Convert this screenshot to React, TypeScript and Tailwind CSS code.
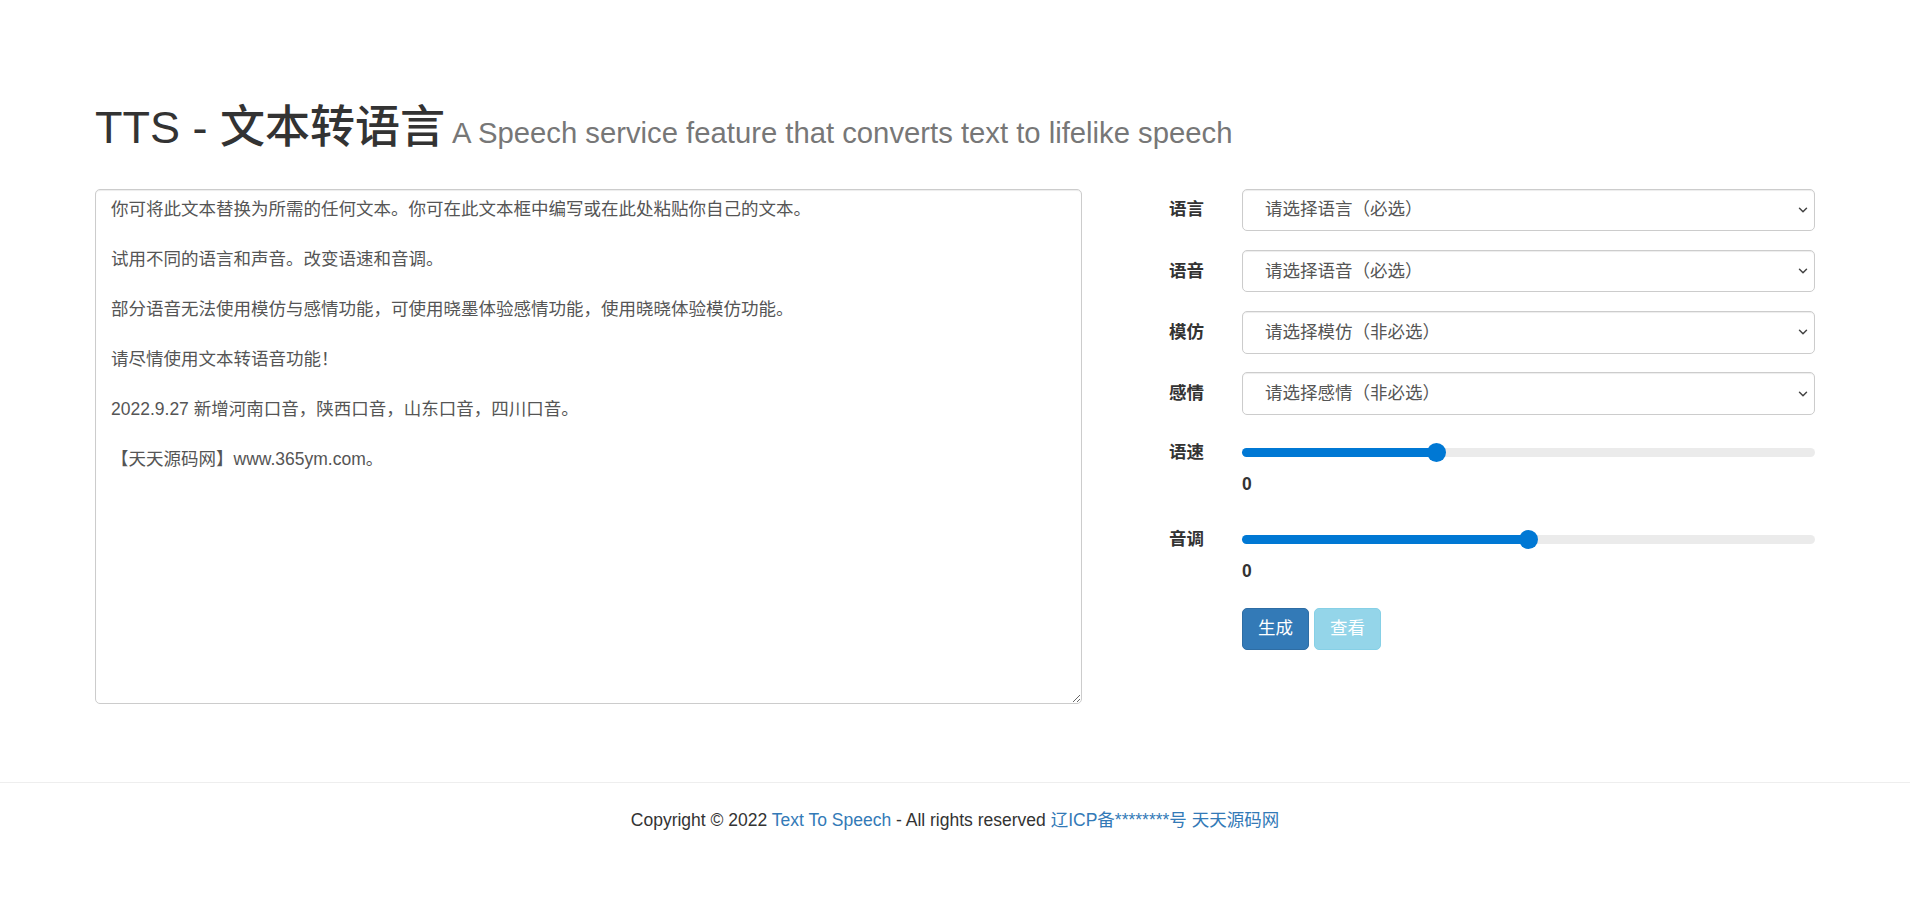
import { ChevronDown } from 'lucide-react'

const sampleText = `你可将此文本替换为所需的任何文本。你可在此文本框中编写或在此处粘贴你自己的文本。

试用不同的语言和声音。改变语速和音调。

部分语音无法使用模仿与感情功能，可使用晓墨体验感情功能，使用晓晓体验模仿功能。

请尽情使用文本转语音功能！

2022.9.27 新增河南口音，陕西口音，山东口音，四川口音。

【天天源码网】www.365ym.com。`

const selects = [
  { label: '语言', placeholder: '请选择语言（必选）' },
  { label: '语音', placeholder: '请选择语音（必选）' },
  { label: '模仿', placeholder: '请选择模仿（非必选）' },
  { label: '感情', placeholder: '请选择感情（非必选）' },
]

const sliders = [
  { label: '语速', min: -50, max: 100, value: 0 },
  { label: '音调', min: -50, max: 50, value: 0 },
]

function Slider({ min, max, value }: { min: number; max: number; value: number }) {
  const frac = (value - min) / (max - min)
  const stop = `calc(9.5px + ${frac} * (100% - 19px))`
  return (
    <input
      type="range"
      min={min}
      max={max}
      defaultValue={value}
      className="h-[9px] w-full cursor-pointer appearance-none rounded-full outline-none [&::-webkit-slider-thumb]:h-[19px] [&::-webkit-slider-thumb]:w-[19px] [&::-webkit-slider-thumb]:appearance-none [&::-webkit-slider-thumb]:rounded-full [&::-webkit-slider-thumb]:bg-[#0078d4]"
      style={{ background: `linear-gradient(to right, #0078d4 ${stop}, #ebebeb ${stop})` }}
    />
  )
}

export default function App() {
  return (
    <div className="min-h-screen bg-white font-['Liberation_Sans','Noto_Sans_CJK_SC',sans-serif] text-[17.5px] leading-[25px] text-[#333]">
      <div className="px-[95px] pt-[103px]">
        <h1 className="text-[45px] leading-[49.5px] font-medium">
          TTS - 文本转语言<span className="ml-[7px] text-[29.25px] font-normal text-[#777]">A Speech service feature that converts text to lifelike speech</span>
        </h1>

        <div className="mt-[30px] flex">
          <textarea
            className="h-[515px] w-[987px] rounded-[5px] border border-[#ccc] px-[15px] py-[7.5px] text-[#555] shadow-[inset_0_1px_1px_rgba(0,0,0,0.075)] outline-none"
            defaultValue={sampleText}
          />

          <form className="ml-[87px] flex flex-1 flex-col">
            {selects.map((s) => (
              <div key={s.label} className="mb-[18.75px] flex h-[42.5px] items-center">
                <label className="w-[73px] font-bold">{s.label}</label>
                <div className="relative h-full flex-1">
                  <select className="h-full w-full appearance-none rounded-[5px] border border-[#ccc] bg-white pl-[22px] pr-[30px] text-[#555] shadow-[inset_0_1px_1px_rgba(0,0,0,0.075)] outline-none">
                    <option>{s.placeholder}</option>
                  </select>
                  <ChevronDown className="pointer-events-none absolute right-[5px] top-1/2 h-[14px] w-[14px] -translate-y-1/2 text-[#444]" strokeWidth={2.5} />
                </div>
              </div>
            ))}

            {sliders.map((s) => (
              <div key={s.label} className="mb-[24px] flex">
                <label className="flex h-[38px] w-[73px] items-center font-bold">{s.label}</label>
                <div className="flex flex-1 flex-col">
                  <div className="flex h-[38px] items-center">
                    <Slider min={s.min} max={s.max} value={s.value} />
                  </div>
                  <span className="font-bold">0</span>
                </div>
              </div>
            ))}

            <div className="flex gap-[5px] pl-[73px]">
              <button type="button" className="h-[42.5px] w-[67px] rounded-[5px] border border-[#2e6da4] bg-[#337ab7] text-white">
                生成
              </button>
              <button type="button" disabled className="h-[42.5px] w-[67px] rounded-[5px] border border-[#46b8da] bg-[#5bc0de] text-white opacity-65">
                查看
              </button>
            </div>
          </form>
        </div>
      </div>

      <footer className="mt-[78px] border-t border-[#eee] pt-[25px] pb-[60px] text-center">
        Copyright © 2022 <a className="text-[#337ab7]" href="#">Text To Speech</a> - All rights reserved{' '}
        <a className="text-[#337ab7]" href="#">辽ICP备********号</a> <a className="text-[#337ab7]" href="#">天天源码网</a>
      </footer>
    </div>
  )
}
